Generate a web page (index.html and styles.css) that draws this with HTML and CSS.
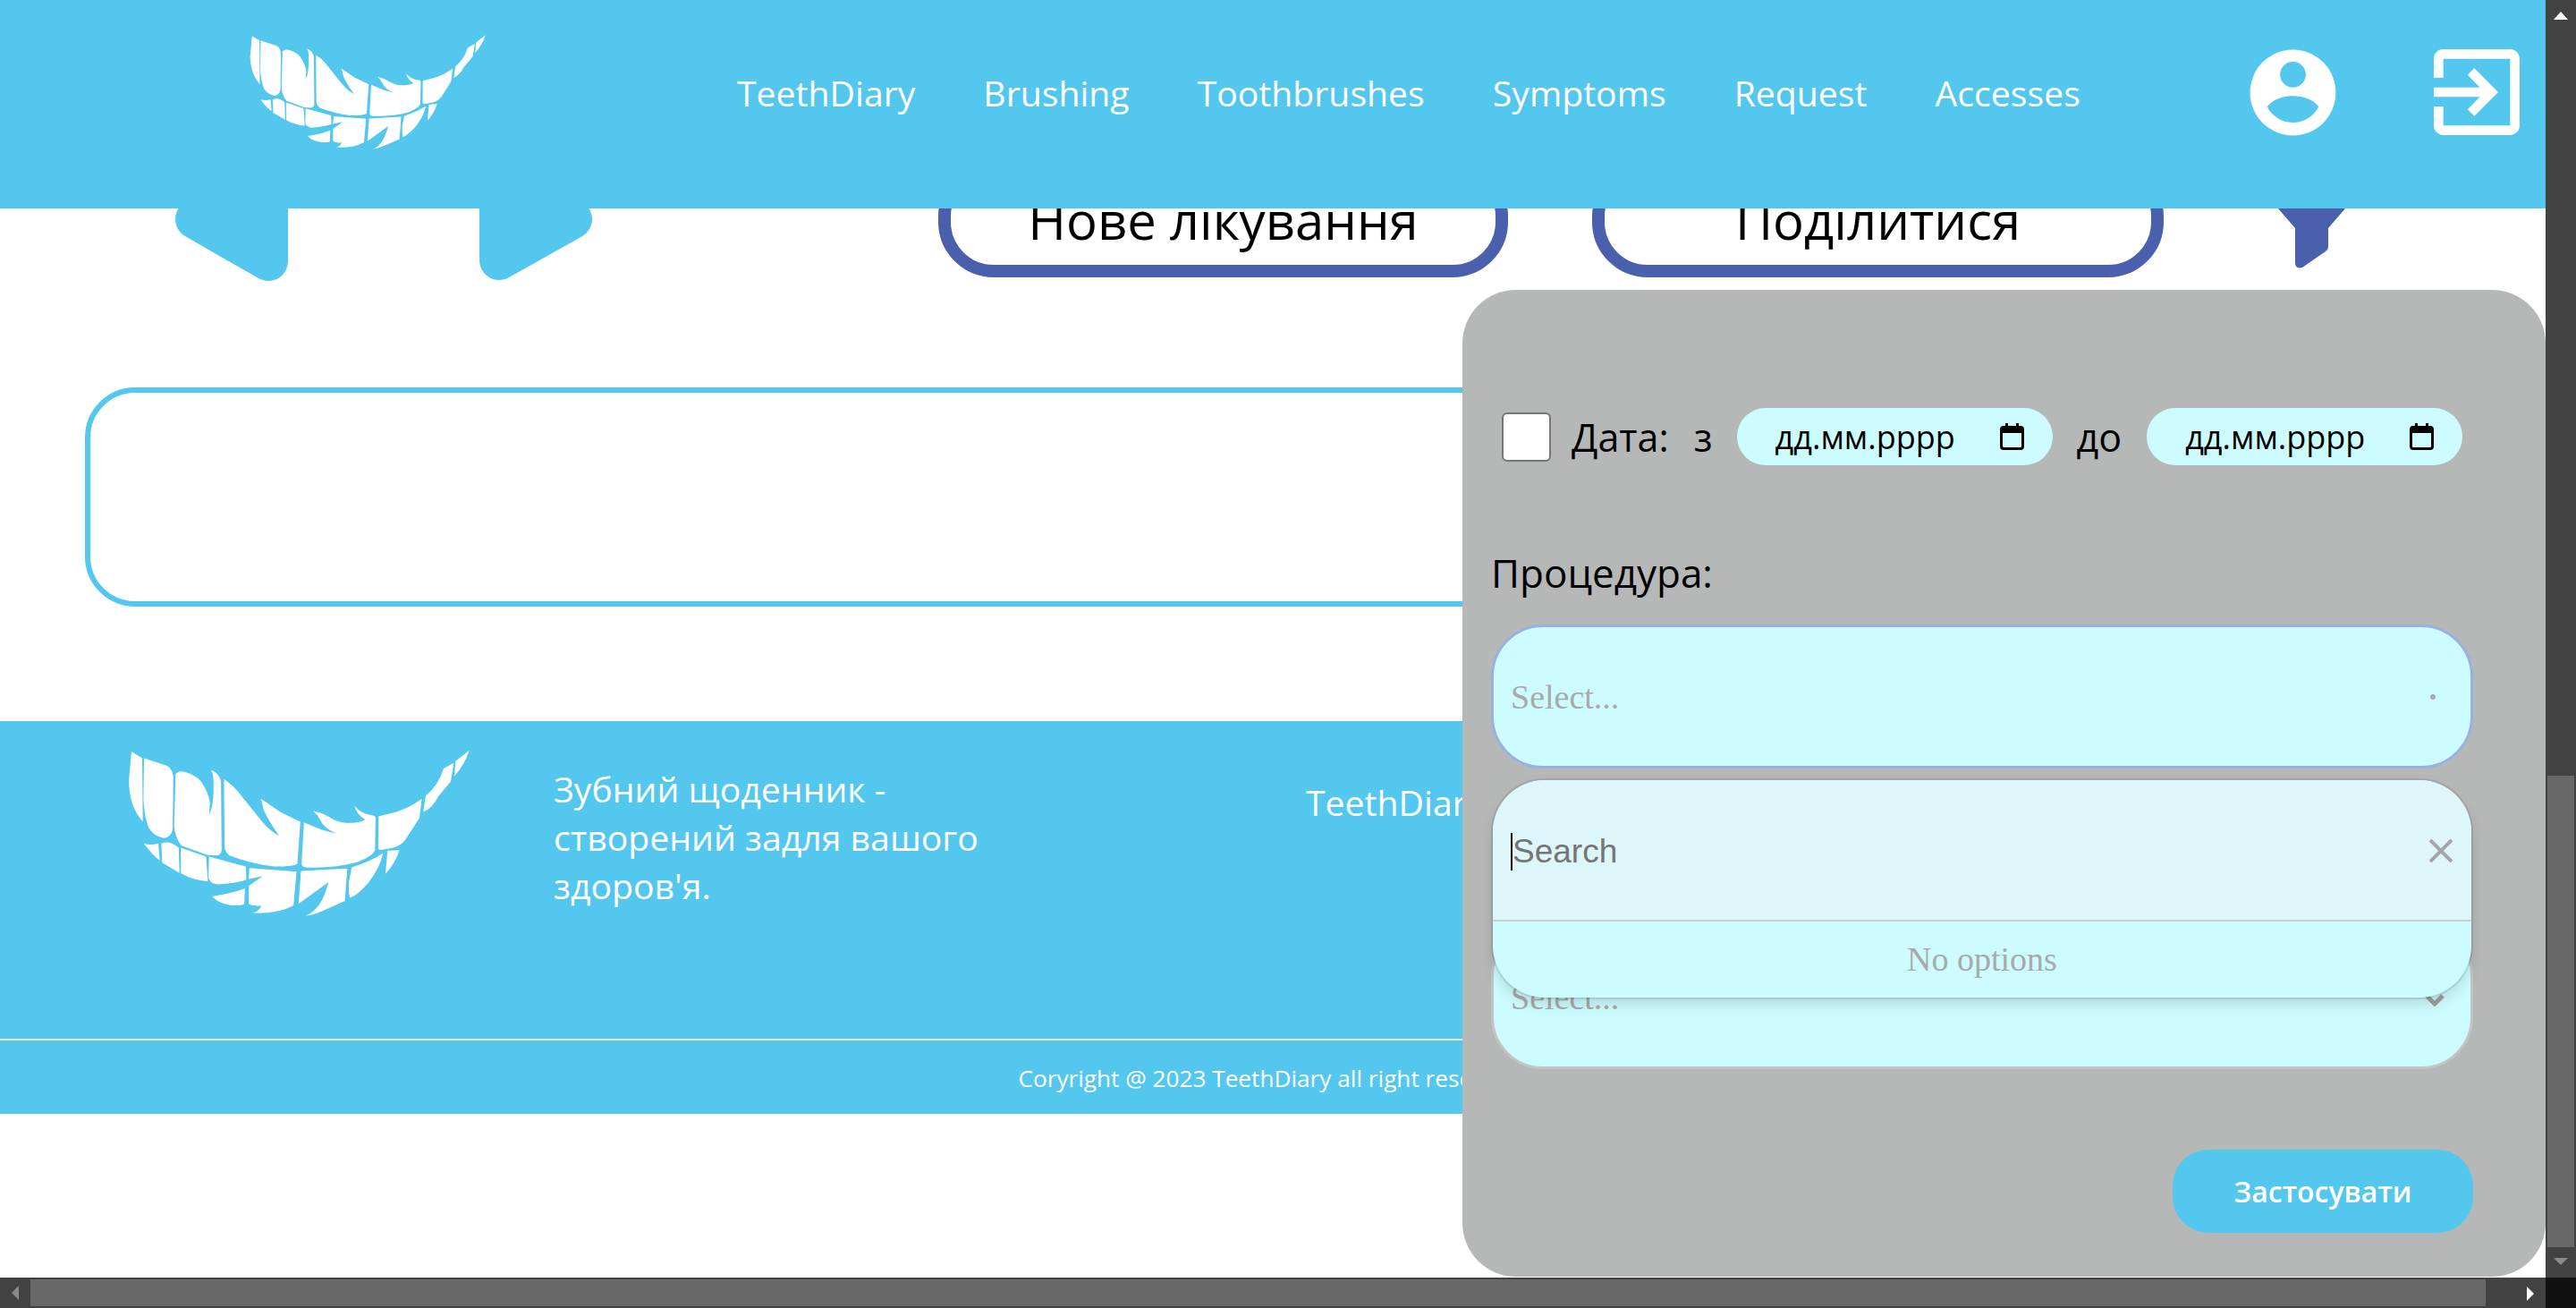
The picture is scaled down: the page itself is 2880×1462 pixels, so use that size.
FILE: index.html
```html
<!DOCTYPE html>
<html lang="uk">
<head>
  <meta charset="UTF-8" />
  <meta name="viewport" content="width=device-width, initial-scale=1.0"/>
  <title>TeethDiary</title>
  <link rel="stylesheet" href="styles.css">
</head>
<body>
  <svg class="defs" width="0" height="0">
    <symbol id="smile" viewBox="130 85 1145 555">
      <path d="M142 90L178 112L180 325C150 290 135 250 133 190Z"/>
      <path d="M184 112L262 138Q280 150 282 175L280 350Q275 378 250 380Q215 372 200 345Q185 310 182 250Z"/>
      <path d="M290 165Q300 152 320 158Q360 170 375 190Q400 225 405 262L402 300Q418 275 417 200Q418 165 408 152Q435 160 442 190L444 420Q442 435 430 438L395 436L310 405Q290 385 285 340Z"/>
      <path d="M452 183Q480 200 500 225L580 325Q610 360 637 372Q600 320 585 285L576 248L640 292L708 325L698 465Q690 475 620 475Q540 465 470 438Q455 425 454 410Z"/>
      <path d="M720 327L780 352L828 365Q785 345 775 320Q765 300 750 288Q785 295 820 318Q850 332 890 328Q915 325 925 318Q895 300 890 272Q910 300 955 305L960 310L958 420Q950 440 900 460Q820 482 725 478Q712 475 712 465Z"/>
      <path d="M970 307L1030 292Q1080 275 1115 248L1107 312L1060 385Q1045 405 1020 412L975 420Q968 418 969 410Z"/>
      <path d="M1128 238Q1170 205 1188 147L1222 128L1212 190L1170 240Q1150 280 1120 292Z"/>
      <path d="M1228 122L1274 86Q1258 135 1224 172Z"/>
      <path d="M183 398Q205 405 232 398L237 455Q215 440 183 398Z"/>
      <path d="M242 398Q270 385 300 412L303 497L245 462Z"/>
      <path d="M307 412L392 442L398 525Q345 520 308 498Z"/>
      <path d="M402 442L525 475L527 518Q500 530 430 535Q402 530 400 510Z"/>
      <path d="M537 480L695 492L685 605Q630 635 550 630Q570 625 577 606Q550 610 535 600L535 540L582 507L535 517Z"/>
      <path d="M412 575Q480 565 522 548L520 600Q515 607 480 605Q435 600 412 575Z"/>
      <path d="M710 490L865 482L857 590L790 620Q760 635 725 640Q780 620 802 527L702 600Z"/>
      <path d="M880 478Q950 455 985 430Q975 480 935 530Q900 570 875 580Q870 575 870 530Z"/>
      <path d="M1000 422L1040 420Q1025 465 993 500Z"/>
    </symbol>
    <symbol id="calendar" viewBox="0 0 27 30">
      <path d="M6 0h3v3h9V0h3v3h2a4 4 0 0 1 4 4v19a4 4 0 0 1-4 4H4a4 4 0 0 1-4-4V7a4 4 0 0 1 4-4h2zM3 11v15a1 1 0 0 0 1 1h19a1 1 0 0 0 1-1V11z"/>
    </symbol>
  </svg>

  <div class="app">
    <div class="view">
      <header class="topbar">
        <svg class="logo-top"><use href="#smile"/></svg>
        <nav class="nav">
          <a href="#">TeethDiary</a>
          <a href="#">Brushing</a>
          <a href="#">Toothbrushes</a>
          <a href="#">Symptoms</a>
          <a href="#">Request</a>
          <a href="#">Accesses</a>
        </nav>
        <svg class="icon-user" viewBox="0 0 24 24">
          <path fill-rule="evenodd" d="M12 2a10 10 0 1 0 0 20a10 10 0 0 0 0-20zM12 4.8a3 3 0 1 1 0 6a3 3 0 0 1 0-6zM6 15.3C7.2 13.7 9.5 12.8 12 12.8s4.8.9 6 2.5C16.8 17.6 14.6 19 12 19s-4.8-1.4-6-3.7z"/>
        </svg>
        <svg class="icon-exit" viewBox="3 3 18 18">
          <path d="M10.09 15.59L11.5 17l5-5-5-5-1.41 1.41L12.67 11H3v2h9.67l-2.58 2.59zM19 3H5c-1.11 0-2 .9-2 2v4h2V5h14v14H5v-4H3v4c0 1.1.89 2 2 2h14c1.1 0 2-.9 2-2V5c0-1.1-.9-2-2-2z"/>
        </svg>
      </header>

      <main class="content">
        <div class="toolbar">
          <svg class="arrow arrow-left" viewBox="0 0 140 150"><polygon points="28,75 110,122 110,28"/></svg>
          <svg class="arrow arrow-right" viewBox="0 0 140 150"><polygon points="112,75 30,121 30,29"/></svg>
          <button class="tool-btn btn-new" type="button">Нове лікування</button>
          <button class="tool-btn btn-share" type="button">Поділитися</button>
          <svg class="funnel" viewBox="0 0 150 105">
            <path d="M8.5 0L56 55V94Q56 101 64 99L90 81Q93 79 93 76V55L140.5 0Z"/>
          </svg>
        </div>

        <div class="note-box"></div>

        <footer class="footer">
          <div class="footer-main">
            <svg class="logo-footer"><use href="#smile"/></svg>
            <p class="footer-text">Зубний щоденник - створений задля вашого здоров'я.</p>
            <a class="footer-link" href="#">TeethDiary</a>
          </div>
          <p class="copyright">Coryright @ 2023 TeethDiary all right reserved.</p>
        </footer>
      </main>

      <aside class="filter">
        <div class="date-row">
          <input class="date-check" type="checkbox" />
          <span class="date-title">Дата:</span>
          <span class="date-from">з</span>
          <div class="date-field">
            <span>дд.мм.рррр</span>
            <svg class="calendar"><use href="#calendar"/></svg>
          </div>
          <span class="date-to">до</span>
          <div class="date-field">
            <span>дд.мм.рррр</span>
            <svg class="calendar"><use href="#calendar"/></svg>
          </div>
        </div>

        <div class="filter-label">Процедура:</div>
        <div class="select select-open">
          <span class="placeholder">Select...</span>
          <span class="select-dot"></span>
        </div>
        <div class="select select-second">
          <span class="placeholder">Select...</span>
          <svg class="chevron" viewBox="0 0 22 14"><path d="M2 2l9 9 9-9"/></svg>
        </div>

        <div class="dropdown">
          <div class="search-row">
            <span class="caret"></span>
            <span class="search-text">Search</span>
            <svg class="clear" viewBox="0 0 26 26"><path d="M1 1l24 24M25 1L1 25"/></svg>
          </div>
          <div class="no-options">No options</div>
        </div>

        <div class="filter-actions">
          <button class="apply" type="button">Застосувати</button>
        </div>
      </aside>
    </div>

    <div class="vbar">
      <span class="tri tri-up"></span>
      <div class="vthumb"></div>
      <span class="tri tri-down"></span>
    </div>
    <div class="hbar">
      <span class="tri tri-left"></span>
      <div class="hthumb"></div>
      <span class="tri tri-right"></span>
    </div>
    <div class="corner"></div>
  </div>
</body>
</html>
```

FILE: styles.css
```css
* {
  box-sizing: border-box;
}
html, body {
  margin: 0;
  height: 100%;
  overflow: hidden;
}
body {
  font-family: "Open Sans", sans-serif;
  background: #fff;
}
.defs {
  position: absolute;
}
.app {
  display: grid;
  grid-template-columns: 1fr 34px;
  grid-template-rows: 1fr 34px;
  height: 1462px;
}
.view {
  position: relative;
  overflow: hidden;
  background: #fff;
}

/* header */
.topbar {
  position: absolute;
  top: 0;
  left: 0;
  right: 0;
  z-index: 2;
  display: flex;
  align-items: center;
  height: 233px;
  padding: 0 29px 27px 279px;
  background: #53c7ee;
}
.logo-top {
  width: 264px;
  height: 128px;
  fill: #fff;
}
.nav {
  display: flex;
  gap: 76px;
  margin-left: 281px;
}
.nav a {
  color: #fff;
  font-size: 39.2px;
  text-decoration: none;
}
.icon-user, .icon-exit {
  width: 96px;
  height: 96px;
  fill: #fff;
}
.icon-user {
  width: 115px;
  height: 115px;
  margin-left: auto;
}
.icon-exit {
  margin-left: 100px;
}

/* page under the header */
.toolbar {
  display: flex;
  align-items: flex-start;
  padding: 170px 0 0 190px;
}
.arrow {
  width: 140px;
  height: 150px;
  fill: #53c7ee;
  stroke: #53c7ee;
  stroke-width: 44;
  stroke-linejoin: round;
}
.arrow-right {
  margin-left: 198px;
}
.tool-btn {
  height: 130px;
  margin-top: 10px;
  border: 14px solid #4a60ad;
  border-radius: 62px;
  background: #fff;
  color: #000;
  font-family: "Open Sans", sans-serif;
  font-size: 58px;
  padding: 0;
}
.btn-new {
  width: 637px;
  margin-left: 381px;
}
.btn-share {
  width: 639px;
  margin-left: 94px;
}
.funnel {
  width: 150px;
  height: 105px;
  margin: 30px 0 0 91px;
  fill: #4a60ad;
}
.note-box {
  height: 245px;
  margin: 113px 96px 0 95px;
  border: 6px solid #53c7ee;
  border-radius: 56px;
}

/* footer */
.footer {
  height: 439px;
  margin-top: 128px;
  background: #53c7ee;
  color: #fff;
}
.footer-main {
  display: flex;
  align-items: flex-start;
  height: 357px;
  padding: 32px 0 0 143px;
  border-bottom: 2px solid #e6f0f4;
}
.logo-footer {
  width: 382px;
  height: 186px;
  fill: #fff;
}
.footer-text {
  width: 490px;
  margin: 17px 0 0 94px;
  font-size: 39.2px;
  line-height: 54px;
}
.footer-link {
  margin: 32px 0 0 351px;
  color: #fff;
  font-size: 39.2px;
  text-decoration: none;
}
.copyright {
  margin: 24px 0 0;
  font-size: 26.2px;
  text-align: center;
}

/* filter panel */
.filter {
  position: absolute;
  top: 324px;
  left: 1635px;
  right: 0;
  bottom: 1px;
  z-index: 3;
  padding: 132px 81px 0 32px;
  border-radius: 60px;
  background: #b6b8b7;
}
.date-row {
  display: flex;
  align-items: center;
  height: 64px;
  padding-left: 12px;
  font-size: 43px;
  color: #000;
}
.date-check {
  appearance: none;
  width: 55px;
  height: 55px;
  margin: 0;
  border: 2px solid #767676;
  border-radius: 6px;
  background: #fff;
}
.date-title {
  margin-left: 23px;
}
.date-from {
  margin-left: 28px;
}
.date-to {
  margin: 0 28px 0 27px;
}
.date-field {
  display: flex;
  align-items: center;
  justify-content: space-between;
  width: 353px;
  height: 64px;
  padding: 0 32px 0 43px;
  border-radius: 32px;
  background: #ccfcff;
  font-size: 36px;
}
.date-from + .date-field {
  margin-left: 27px;
}
.calendar {
  width: 27px;
  height: 30px;
  fill: #000;
}
.filter-label {
  margin-top: 90px;
  font-size: 44px;
  line-height: 60px;
  color: #000;
}
.select {
  display: flex;
  align-items: center;
  justify-content: space-between;
  height: 161px;
  margin-top: 28px;
  padding: 0 29px 0 19px;
  border: 3px solid #c4c4c4;
  border-radius: 58px;
  background: #ccfcff;
}
.select-open {
  border-color: #97b1e0;
}
.select-second {
  margin-top: 175px;
}
.placeholder {
  font-family: "Liberation Serif", serif;
  font-size: 38px;
  color: #a9a9a9;
}
.select-dot {
  width: 6px;
  height: 6px;
  margin-right: 10px;
  border-radius: 50%;
  background: #a9a9a9;
}
.chevron {
  width: 22px;
  height: 14px;
  margin-top: 6px;
  fill: none;
  stroke: #a0a0a0;
  stroke-width: 5;
}

/* open dropdown lies over the second select */
.dropdown {
  position: absolute;
  top: 548px;
  left: 34px;
  width: 1094px;
  height: 243px;
  overflow: hidden;
  border-radius: 58px;
  background: #ccfcff;
  box-shadow: 0 0 0 2px rgba(0, 0, 0, 0.09), 0 8px 16px rgba(0, 0, 0, 0.13);
}
.search-row {
  position: relative;
  display: flex;
  align-items: center;
  height: 158px;
  padding: 3px 0 0 20px;
  border-bottom: 2px solid #c8cfd0;
  background: #ddf6fa;
}
.caret {
  width: 2px;
  height: 42px;
  background: #000;
}
.search-text {
  font-family: "Liberation Sans", sans-serif;
  font-size: 37px;
  color: #757575;
}
.clear {
  position: absolute;
  right: 21px;
  top: 66px;
  width: 26px;
  height: 26px;
  fill: none;
  stroke: #a5a5a5;
  stroke-width: 4;
}
.no-options {
  height: 85px;
  font-family: "Liberation Serif", serif;
  font-size: 38px;
  line-height: 85px;
  text-align: center;
  color: #a9a9a9;
}
.filter-actions {
  display: flex;
  justify-content: flex-end;
  margin-top: 90px;
}
.apply {
  width: 336px;
  height: 93px;
  border: 0;
  border-radius: 40px;
  background: #53c7ee;
  color: #fff;
  font-family: "Open Sans", sans-serif;
  font-size: 32px;
  font-weight: 600;
}

/* window scrollbars */
.vbar {
  position: relative;
  background: #424242;
}
.vthumb {
  position: absolute;
  top: 867px;
  left: 2px;
  width: 30px;
  height: 527px;
  background: #686868;
}
.hbar {
  position: relative;
  background: #424242;
}
.hthumb {
  position: absolute;
  top: 2px;
  left: 34px;
  width: 2745px;
  height: 30px;
  background: #686868;
}
.corner {
  background: #111;
}
.tri {
  position: absolute;
  width: 0;
  height: 0;
  border-style: solid;
  border-color: transparent;
}
.tri-up {
  top: 13px;
  left: 9px;
  border-width: 0 8px 9px;
  border-bottom-color: #fff;
}
.tri-down {
  top: 1406px;
  left: 9px;
  border-width: 8px 8px 0;
  border-top-color: #8a8a8a;
}
.tri-left {
  top: 9px;
  left: 13px;
  border-width: 8px 8px 8px 0;
  border-right-color: #8a8a8a;
}
.tri-right {
  top: 10px;
  left: 2825px;
  border-width: 8px 0 8px 8px;
  border-left-color: #fff;
}
```
